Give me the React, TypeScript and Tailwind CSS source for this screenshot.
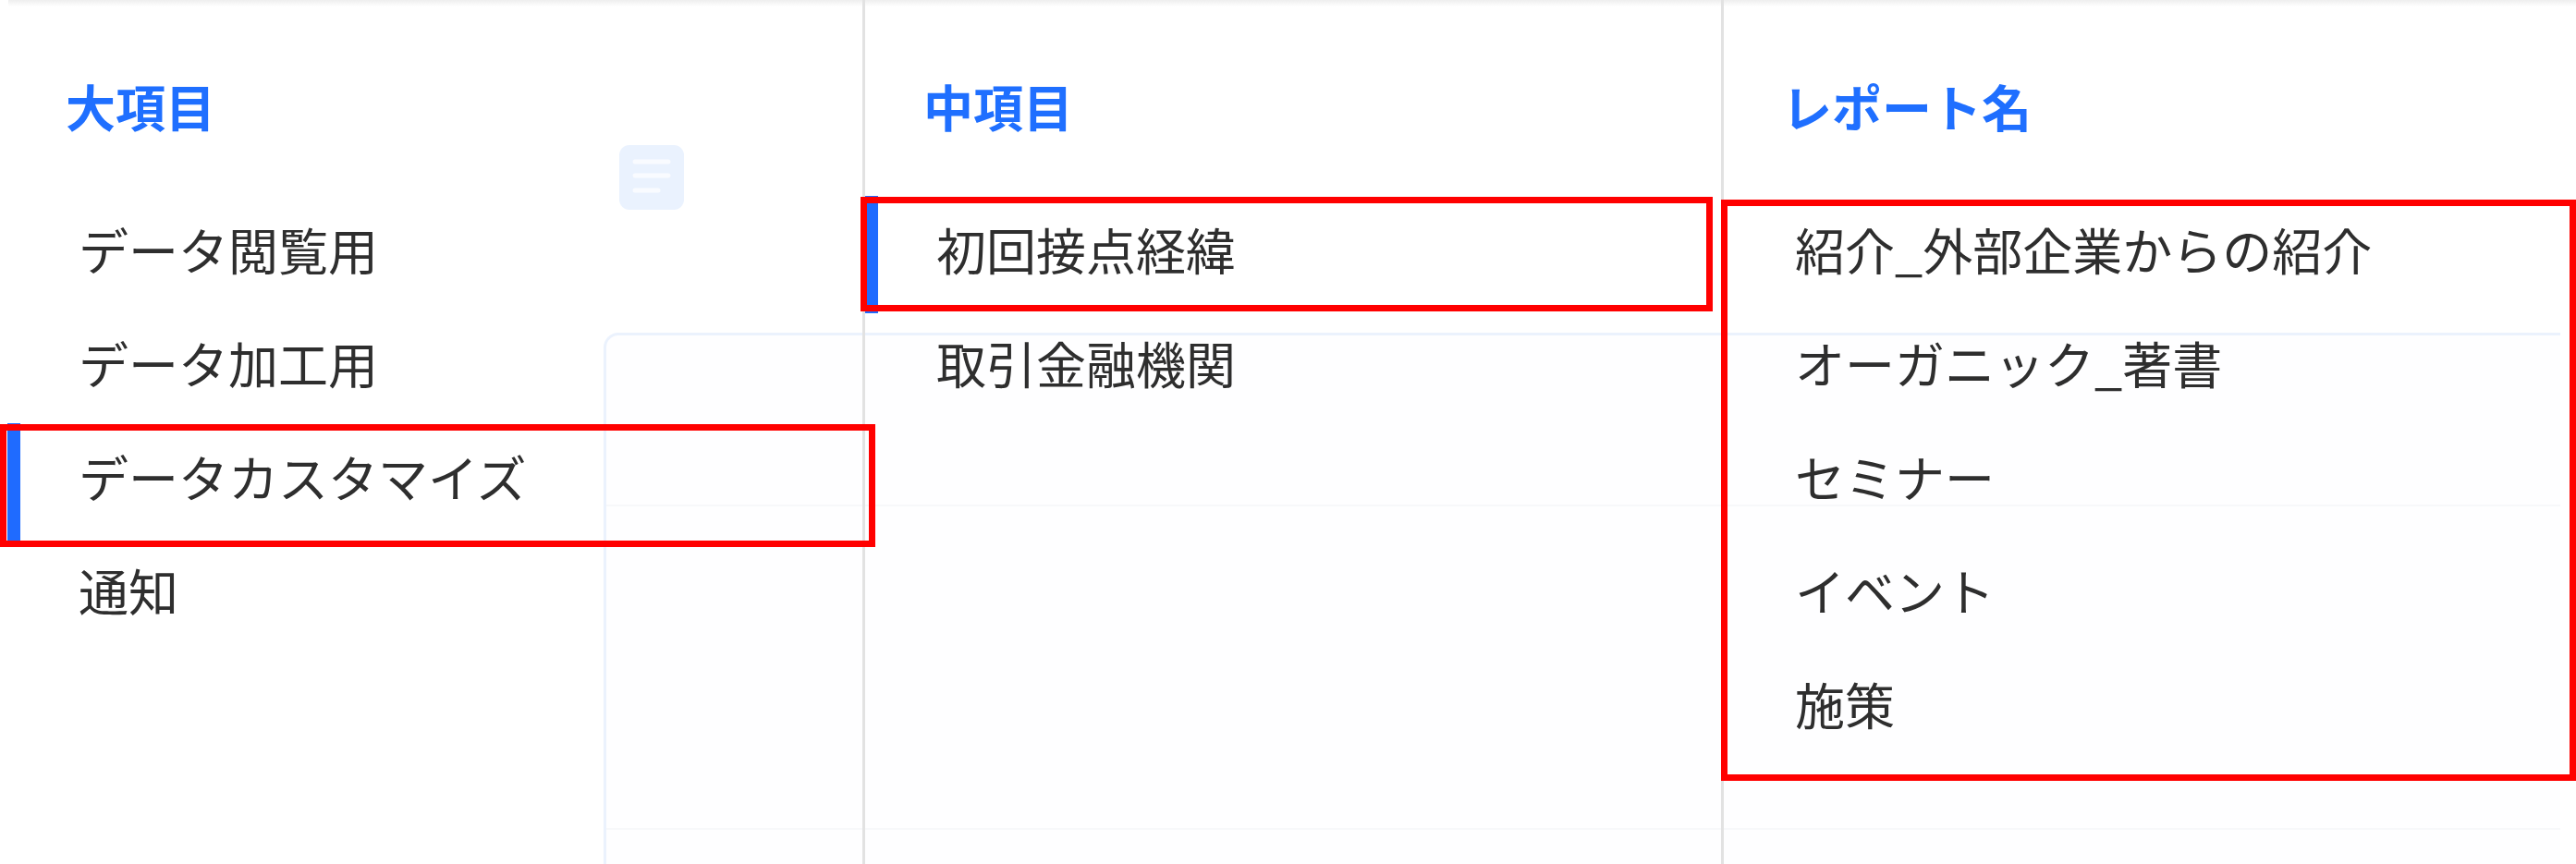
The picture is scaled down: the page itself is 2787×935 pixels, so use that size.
const MAJOR = ["データ閲覧用", "データ加工用", "データカスタマイズ", "通知"];
const MIDDLE = ["初回接点経緯", "取引金融機関"];
const REPORTS = ["紹介_外部企業からの紹介", "オーガニック_著書", "セミナー", "イベント", "施策"];

function Row({ label, active = false }: { label: string; active?: boolean }) {
  return (
    <div
      className={
        active
          ? "-mb-[4px] flex h-[127px] items-center border-l-[14px] border-[#1f6bff] pb-[12px] pl-[63px]"
          : "flex h-[123px] items-center pb-[8px] pl-[77px]"
      }
    >
      <span className="text-[54px] leading-[54px] text-[#2e2e2e]">{label}</span>
    </div>
  );
}

function Column({
  title,
  items,
  active,
  className,
}: {
  title: string;
  items: string[];
  active?: number;
  className: string;
}) {
  return (
    <section className={className}>
      <h2 className="h-[54px] pl-[63px] text-[54px] font-bold leading-[54px] text-[#1f6fff]">
        {title}
      </h2>
      <div className="mt-[70px] flex flex-col">
        {items.map((label, i) => (
          <Row key={label} label={label} active={i === active} />
        ))}
      </div>
    </section>
  );
}

export default function App() {
  return (
    <div className="relative h-[935px] w-full overflow-hidden bg-white font-['Noto_Sans_CJK_JP','Noto_Sans',sans-serif]">
      {/* 背面の画面（ポップアップ越しに透けて見える部分） */}
      <div className="absolute inset-0">
        <div className="pl-[670px] pt-[157px]">
          <svg width="70" height="70" viewBox="0 0 70 70">
            <rect width="70" height="70" rx="11" fill="#eaf2fe" />
            <g stroke="#f9fbff" strokeWidth="5" strokeLinecap="round">
              <path d="M17 18h36" />
              <path d="M17 33h36" />
              <path d="M17 49h25" />
            </g>
          </svg>
        </div>
        <div className="ml-[653px] mr-[17px] mt-[133px] flex h-[700px] flex-col rounded-tl-[16px] border-l-[3px] border-t-[3px] border-[#ebf2fd] bg-[#fefeff]">
          <div className="h-[185px] border-b-2 border-[#f7f8fa]" />
          <div className="h-[350px] border-b-2 border-[#f7f8fa]" />
        </div>
      </div>

      {/* 上端の影 */}
      <div className="absolute left-[9px] right-0 top-0 h-[7px] bg-gradient-to-b from-[#eeeeee] to-transparent" />

      {/* 3カラム選択 */}
      <div className="relative flex h-full pl-[8px]">
        <Column title="大項目" items={MAJOR} active={2} className="w-[925px] shrink-0 pt-[88px]" />
        <Column
          title="中項目"
          items={MIDDLE}
          active={0}
          className="w-[929px] shrink-0 border-l-[3px] border-[#e2e2e2] pt-[88px]"
        />
        <Column
          title="レポート名"
          items={REPORTS}
          className="flex-1 border-l-[3px] border-[#e2e2e2] pt-[88px]"
        />
      </div>

      {/* 注釈の赤枠 */}
      <div className="absolute left-0 top-[459px] h-[133px] w-[947px] border-[7px] border-[#ff0000]" />
      <div className="absolute left-[931px] top-[213px] h-[124px] w-[922px] border-[7px] border-[#ff0000]" />
      <div className="absolute left-[1862px] top-[216px] h-[629px] w-[925px] border-[7px] border-[#ff0000]" />
    </div>
  );
}
